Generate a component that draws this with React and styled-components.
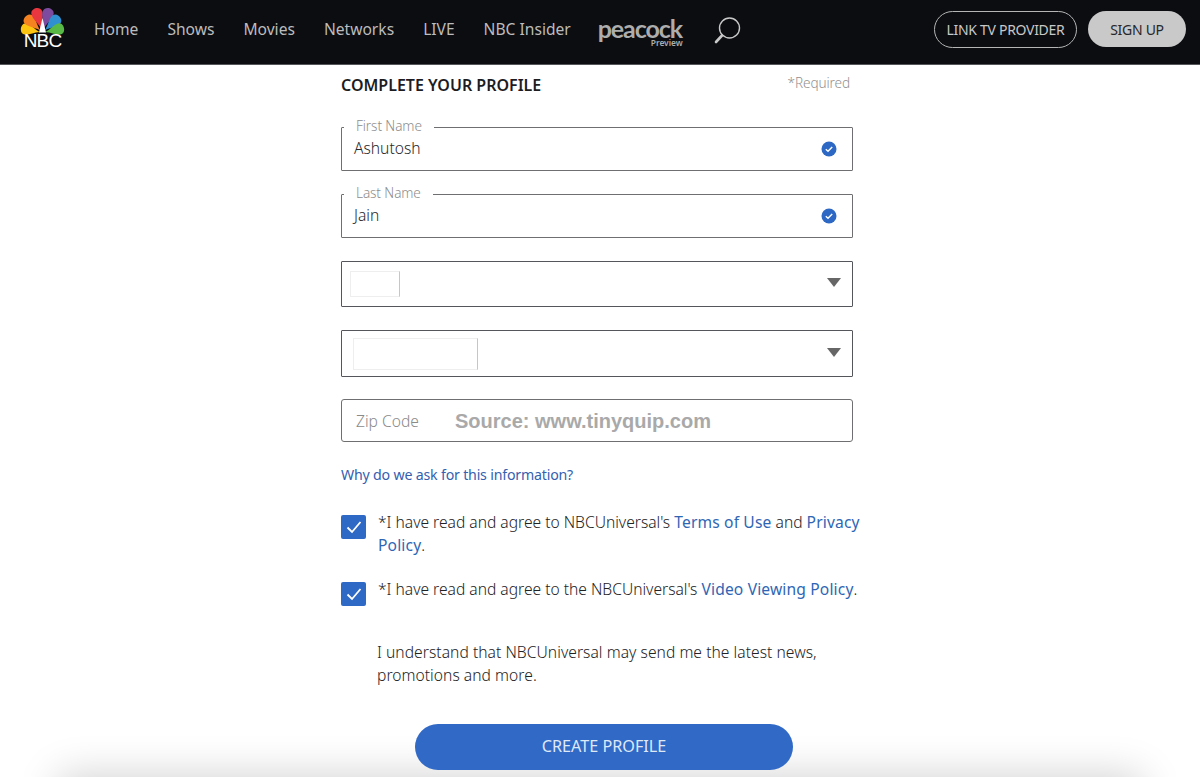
import React from 'react';
import styled, { createGlobalStyle } from 'styled-components';

const Global = createGlobalStyle`
	html, body {
		margin: 0;
		background: #fff;
		font-family: "Noto Sans", "Open Sans", sans-serif;
	}
	* { box-sizing: border-box; }
`;

const feathers = [
	{ angle: -78, color: '#fbc512', len: 22.5 },
	{ angle: -47, color: '#f58220', len: 24 },
	{ angle: -16, color: '#e8373f', len: 26 },
	{ angle: 16, color: '#7c4a9e', len: 26 },
	{ angle: 47, color: '#2f8fd0', len: 24 },
	{ angle: 78, color: '#59b947', len: 22.5 },
];

const Logo = () => (
	<svg width="46" height="44" viewBox="0 0 46 44">
		{feathers.map(f => (
			<path
				key={f.angle}
				transform={`translate(22.5 26.5) rotate(${f.angle})`}
				fill={f.color}
				d={`M0 -3 C-1.5 -${f.len * 0.4} -6 -${f.len * 0.6} -5.6 -${f.len * 0.8} C-5 -${f.len + 0.8} 5 -${f.len + 0.8} 5.6 -${f.len * 0.8} C6 -${f.len * 0.6} 1.5 -${f.len * 0.4} 0 -3Z`}
			/>
		))}
		<path d="M22.5 12L19 26.5H26Z" fill="#fff" />
		<text x="22.5" y="41" textAnchor="middle" fill="#fff" fontFamily="Liberation Sans, sans-serif" fontSize="19" letterSpacing="-0.8">NBC</text>
	</svg>
);

const Search = () => (
	<svg width="28" height="28" viewBox="0 0 28 28" fill="none" stroke="#c9c9c9">
		<circle cx="16.5" cy="11" r="10" strokeWidth="1.4" />
		<path d="M9 18.5L3 25" strokeWidth="2.6" strokeLinecap="round" />
	</svg>
);

const SmallCheck = () => (
	<svg width="16" height="16" viewBox="0 0 16 16">
		<circle cx="8" cy="8" r="7.5" fill="#2d68c4" />
		<path d="M4.8 8.3L7 10.3L11.2 6" fill="none" stroke="#fff" strokeWidth="1.4" />
	</svg>
);

const BoxCheck = () => (
	<svg width="16" height="14" viewBox="0 0 16 14">
		<path d="M1.5 7.5L6 12L14.5 2" fill="none" stroke="#fff" strokeWidth="1.8" />
	</svg>
);

export default function App() {
	return (
		<Page>
			<Global />
			<Header>
				<LogoSlot><Logo /></LogoSlot>
				<Nav>
					<NavItem>Home</NavItem>
					<NavItem>Shows</NavItem>
					<NavItem>Movies</NavItem>
					<NavItem>Networks</NavItem>
					<NavItem>LIVE</NavItem>
					<NavItem>NBC Insider</NavItem>
				</Nav>
				<Peacock>
					<PeacockWord>peacock</PeacockWord>
					<PeacockSub>Preview</PeacockSub>
				</Peacock>
				<SearchSlot><Search /></SearchSlot>
				<HeaderRight>
					<OutlineButton>LINK TV PROVIDER</OutlineButton>
					<SignUp>SIGN UP</SignUp>
				</HeaderRight>
			</Header>
			<Main>
				<TitleRow>
					<Title>COMPLETE YOUR PROFILE</Title>
					<Required>*Required</Required>
				</TitleRow>
				<Field $h={44} $mt={1}>
					<FloatLabel>First Name</FloatLabel>
					<Value>Ashutosh</Value>
					<SmallCheck />
				</Field>
				<Field $h={44} $mt={24}>
					<FloatLabel>Last Name</FloatLabel>
					<Value>Jain</Value>
					<SmallCheck />
				</Field>
				<Field $h={46} $mt={24} $dark>
					<SelectInner $w={50} $h={26} $ml={-3} />
					<Arrow />
				</Field>
				<Field $h={47} $mt={24} $dark>
					<SelectInner $w={125} $h={32} $ml={0} />
					<Arrow />
				</Field>
				<Field $h={43} $mt={23} $round>
					<Placeholder>Zip Code</Placeholder>
					<Source>Source: www.tinyquip.com</Source>
				</Field>
				<Why>Why do we ask for this information?</Why>
				<CheckRow $mt={26}>
					<CheckBox><BoxCheck /></CheckBox>
					<CheckText>
						*I have read and agree to NBCUniversal's <A>Terms of Use</A> and <A>Privacy Policy</A>.
					</CheckText>
				</CheckRow>
				<CheckRow $mt={21}>
					<CheckBox><BoxCheck /></CheckBox>
					<CheckText>
						*I have read and agree to the NBCUniversal's <A>Video Viewing Policy</A>.
					</CheckText>
				</CheckRow>
				<Consent>
					I understand that NBCUniversal may send me the latest news, promotions and more.
				</Consent>
				<Create>CREATE PROFILE</Create>
			</Main>
			<Shade />
		</Page>
	);
}

const Page = styled.div`
	position: relative;
	height: 777px;
	overflow: hidden;
`;
const Header = styled.header`
	height: 65px;
	background: #0c0d11;
	border-bottom: 1px solid #55565a;
	display: flex;
	align-items: center;
	padding: 0 14px 0 20px;
`;
const LogoSlot = styled.div`
	width: 46px;
	height: 44px;
	margin-top: -9px;
`;
const Nav = styled.nav`
	display: flex;
	margin: -6px 0 0 28px;
	gap: 29px;
`;
const NavItem = styled.a`
	color: #bcbcbc;
	font-size: 15.6px;
	white-space: nowrap;
`;
const Peacock = styled.div`
	position: relative;
	margin: -7px 0 0 27px;
	width: 85px;
	height: 28px;
	color: #adadad;
`;
const PeacockWord = styled.span`
	display: block;
	font-family: Lato, sans-serif;
	font-weight: 700;
	font-size: 25px;
	line-height: 26px;
	letter-spacing: -1.1px;
`;
const PeacockSub = styled.span`
	position: absolute;
	right: 0;
	top: 24px;
	font-size: 8.4px;
	line-height: 8px;
	font-weight: 600;
`;
const SearchSlot = styled.div`
	margin: -3px 0 0 30px;
	height: 28px;
`;
const HeaderRight = styled.div`
	margin-left: auto;
	display: flex;
	align-items: center;
	gap: 11px;
	margin-top: -6px;
`;
const OutlineButton = styled.button`
	width: 143px;
	height: 37px;
	border: 1px solid #b5b5b5;
	border-radius: 19px;
	background: transparent;
	color: #c8c8c8;
	font: 14px "Noto Sans", sans-serif;
	letter-spacing: -0.3px;
	padding: 0;
`;
const SignUp = styled.button`
	width: 98px;
	height: 36px;
	border: 0;
	border-radius: 18px;
	background: #c9c9c9;
	color: #26272b;
	font: 14px "Noto Sans", sans-serif;
	letter-spacing: -0.3px;
	padding: 0;
`;
const Main = styled.main`
	width: 512px;
	margin-left: 341px;
`;
const TitleRow = styled.div`
	display: flex;
	justify-content: space-between;
	align-items: flex-start;
	height: 62px;
	padding: 8px 3px 0 0;
`;
const Title = styled.h1`
	margin: 0;
	font-size: 16px;
	line-height: 24px;
	font-weight: 600;
	color: #1d1d1f;
`;
const Required = styled.span`
	font-size: 13.6px;
	line-height: 20px;
	letter-spacing: -0.1px;
	font-weight: 300;
	color: #8f8f8f;
`;
const Field = styled.div`
	position: relative;
	height: ${p => p.$h}px;
	margin-top: ${p => p.$mt - 1}px;
	border: 1px solid ${p => (p.$dark ? '#55565c' : '#6f6f72')};
	border-radius: ${p => (p.$round ? 3 : 1)}px;
	display: flex;
	align-items: center;
	justify-content: space-between;
	padding: 0 15px 0 12px;
`;
const FloatLabel = styled.label`
	position: absolute;
	top: -11px;
	left: 2px;
	padding: 0 12px;
	background: #fff;
	font-size: 13.6px;
	line-height: 18px;
	font-weight: 300;
	letter-spacing: -0.1px;
	color: #8c8c8c;
`;
const Value = styled.span`
	font-size: 15.6px;
	font-weight: 300;
	color: #28282b;
	margin-top: -3px;
`;
const SelectInner = styled.div`
	width: ${p => p.$w}px;
	height: ${p => p.$h}px;
	margin-left: ${p => p.$ml - 1}px;
	border: 1px solid #eee;
	border-right-color: #c6c6c6;
`;
const Arrow = styled.div`
	width: 0;
	height: 0;
	margin-right: -4px;
	margin-top: -3px;
	border-left: 7px solid transparent;
	border-right: 7px solid transparent;
	border-top: 9px solid #666;
`;
const Placeholder = styled.span`
	position: absolute;
	left: 14px;
	font-size: 15.6px;
	font-weight: 300;
	color: #8a8a8a;
`;
const Source = styled.span`
	position: absolute;
	left: 113px;
	top: 10px;
	font: 700 20px "Liberation Sans", sans-serif;
	color: #a9a9a9;
`;
const Why = styled.a`
	display: block;
	margin-top: 23px;
	font-size: 14.2px;
	line-height: 20px;
	letter-spacing: -0.2px;
	color: #3560b0;
`;
const CheckRow = styled.div`
	display: flex;
	width: 525px;
	margin-top: ${p => p.$mt}px;
	gap: 12px;
`;
const CheckBox = styled.div`
	flex: none;
	width: 25px;
	height: 24px;
	margin-top: 4px;
	border-radius: 2px;
	background: #2f69c6;
	display: flex;
	align-items: center;
	justify-content: center;
`;
const CheckText = styled.p`
	margin: 0;
	font-size: 15.6px;
	line-height: 23px;
	font-weight: 300;
	color: #222225;
`;
const A = styled.a`
	color: #2f66b4;
	font-weight: 400;
	letter-spacing: 0.15px;
`;
const Consent = styled.p`
	margin: 35px 0 0 36px;
	width: 460px;
	font-size: 15.6px;
	line-height: 23px;
	font-weight: 300;
	letter-spacing: 0.05px;
	color: #222225;
`;
const Create = styled.button`
	display: block;
	position: relative;
	z-index: 1;
	width: 378px;
	height: 46px;
	margin: 37px 0 0 74px;
	border: 0;
	border-radius: 23px;
	background: #3069c6;
	color: #dfe8f6;
	font: 16.2px "Noto Sans", sans-serif;
	padding: 0 0 3px;
`;
const Shade = styled.div`
	position: absolute;
	left: 70px;
	right: 70px;
	bottom: -40px;
	height: 30px;
	box-shadow: 0 0 40px 12px rgba(0, 0, 0, 0.18);
`;
